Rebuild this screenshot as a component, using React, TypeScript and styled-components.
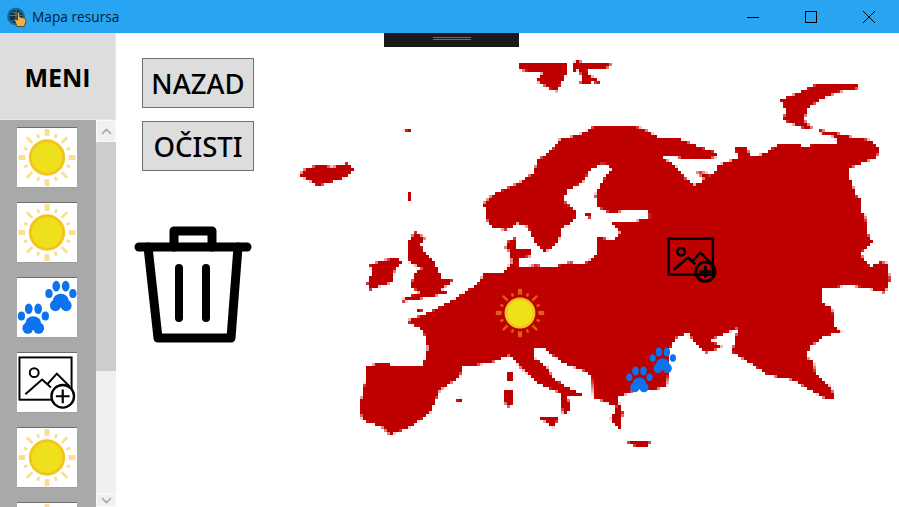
import React from "react";
import styled, { createGlobalStyle } from "styled-components";

const Global = createGlobalStyle`
  html, body { margin: 0; padding: 0; height: 100%; background: #fff; overflow: hidden; }
  #root { height: 100%; }
`;

const Windowed = styled.div`
  position: relative;
  width: 899px;
  height: 507px;
  display: flex;
  flex-direction: column;
  font-family: "Open Sans", "Noto Sans", sans-serif;
  color: #000;
  overflow: hidden;
`;
const TitleBar = styled.header`
  height: 33px;
  flex: none;
  background: #27a5f3;
  display: flex;
  align-items: center;
  padding: 0 1px 0 7px;
`;
const TitleText = styled.span`
  margin-left: 5px;
  font-size: 13.7px;
  color: #04202e;
`;
const WindowControls = styled.div`
  margin-left: auto;
  display: flex;
`;
const WindowButton = styled.div`
  width: 58px;
  height: 33px;
  display: flex;
  align-items: center;
  justify-content: center;
`;
const Body = styled.main`
  flex: 1;
  min-height: 0;
  display: flex;
`;
const Sidebar = styled.aside`
  width: 116px;
  flex: none;
  display: flex;
  flex-direction: column;
`;
const MenuHeader = styled.div`
  height: 87px;
  flex: none;
  box-sizing: border-box;
  background: #dddddd;
  border-right: 1px solid #e6e6e6;
  border-bottom: 1px solid #e6e6e6;
  display: flex;
  align-items: center;
  justify-content: center;
  font-size: 25px;
  font-weight: 700;
  padding-top: 1px;
`;
const ListArea = styled.div`
  flex: 1;
  min-height: 0;
  display: flex;
`;
const CardList = styled.div`
  width: 96px;
  flex: none;
  box-sizing: border-box;
  background: #a9a9a9;
  padding: 7px 0 0 17px;
  display: flex;
  flex-direction: column;
  gap: 14px;
  overflow: hidden;
`;
const Card = styled.div`
  width: 60px;
  height: 61px;
  flex: none;
  box-sizing: border-box;
  background: #fff;
  border-top: 1px solid #6e6e6e;
  border-bottom: 1px solid #a0a0a0;
  display: flex;
`;
const Scrollbar = styled.div`
  width: 20px;
  flex: none;
  background: #f0f0f0;
  display: flex;
  flex-direction: column;
`;
const ScrollButton = styled.div<{ $h: number }>`
  height: ${(p) => p.$h}px;
  flex: none;
  box-sizing: border-box;
  background: #f0f0f0;
  border: 1px solid #fafafa;
  display: flex;
  align-items: center;
  justify-content: center;
`;
const Thumb = styled.div`
  height: 229px;
  flex: none;
  background: #cdcdcd;
`;
const Track = styled.div`
  flex: 1;
`;
const ToolColumn = styled.section`
  width: 160px;
  flex: none;
  box-sizing: border-box;
  padding: 25px 0 0 26px;
  display: flex;
  flex-direction: column;
`;
const ActionButton = styled.button`
  width: 112px;
  height: 50px;
  flex: none;
  margin: 0 0 13px;
  padding: 1px 0 0;
  box-sizing: border-box;
  background: #dddddd;
  border: 1px solid #707070;
  font-family: "Noto Sans", "Open Sans", sans-serif;
  font-size: 27.5px;
  font-weight: 500;
  color: #000;
`;
const TrashWrap = styled.div`
  margin: 38px 0 0 -9px;
  line-height: 0;
`;
const MapCanvas = styled.section`
  position: relative;
  flex: 1;
  min-width: 0;
`;
const MapSvg = styled.svg`
  display: block;
  width: 100%;
  height: 100%;
`;
const Pin = styled.div<{ $x: number; $y: number }>`
  position: absolute;
  left: ${(p) => p.$x}px;
  top: ${(p) => p.$y}px;
  width: 50px;
  height: 50px;
  display: flex;
`;
const DebugHandle = styled.div`
  position: absolute;
  left: 384px;
  top: 33px;
  width: 135px;
  height: 14px;
  background: #1a1a1a;
  display: flex;
  flex-direction: column;
  align-items: center;
  padding-top: 4px;
  box-sizing: border-box;
  gap: 1px;
`;
const HandleLine = styled.div`
  width: 38px;
  height: 1px;
  background: #6b6b6b;
`;
const HiddenDefs = styled.svg`
  position: absolute;
  width: 0;
  height: 0;
`;

const Sun = () => {
  const long = [0, 90, 180, 270];
  const diag = [45, 135, 225, 315];
  const short = [22.5, 67.5, 112.5, 157.5, 202.5, 247.5, 292.5, 337.5];
  return (
    <svg viewBox="0 0 60 60" width="100%" height="100%">
      <g filter="url(#soft)">
        <g stroke="#f5c020" strokeOpacity={0.5}>
          {long.map((a) => (
            <line key={a} x1="30" y1="1" x2="30" y2="8" strokeWidth="5" transform={`rotate(${a} 30 30)`} />
          ))}
          {diag.map((a) => (
            <line key={a} x1="30" y1="1" x2="30" y2="9" strokeWidth="2.8" transform={`rotate(${a} 30 30)`} />
          ))}
          {short.map((a) => (
            <line key={a} x1="30" y1="4.5" x2="30" y2="8.5" strokeWidth="2.8" transform={`rotate(${a} 30 30)`} />
          ))}
        </g>
        <circle cx="30" cy="30" r="18.5" fill="#f3c51f" />
        <circle cx="30" cy="30" r="15.5" fill="#efe01d" />
      </g>
    </svg>
  );
};

const PawShape = ({ x, y }: { x: number; y: number }) => (
  <g transform={`translate(${x} ${y})`} fill="#0b72ee">
    <ellipse cx="0" cy="-2" rx="8" ry="7" />
    <ellipse cx="-5.5" cy="3" rx="5.5" ry="5.8" />
    <ellipse cx="5.5" cy="3" rx="5.5" ry="5.8" />
    <ellipse cx="-12" cy="-9.3" rx="3.7" ry="4.6" />
    <ellipse cx="-4.6" cy="-16.7" rx="3.9" ry="5.4" />
    <ellipse cx="5" cy="-16.7" rx="3.9" ry="5.4" />
    <ellipse cx="12.3" cy="-9.3" rx="3.7" ry="4.6" />
  </g>
);
const Paws = () => (
  <svg viewBox="0 0 60 60" width="100%" height="100%">
    <g filter="url(#soft)">
      <PawShape x={44} y={25} />
      <PawShape x={16} y={48} />
    </g>
  </svg>
);
const AddImage = ({ disc, weight }: { disc: string; weight: number }) => (
  <svg viewBox="0 0 60 60" width="100%" height="100%" fill="none" stroke="#000" strokeWidth={weight}>
    <rect x="2" y="4.5" width="53" height="43" />
    <circle cx="17" cy="20" r="4.5" />
    <path d="M8 42 L25 27 L34 35 M31 31 L40 21 L53 34" />
    <circle cx="46" cy="44" r="11.5" fill={disc} strokeWidth={weight + 0.4} />
    <path d="M46 37 V51 M39 44 H53" strokeWidth={weight + 0.2} />
  </svg>
);
const Trash = () => (
  <svg width="124" height="124" viewBox="0 0 124 124" fill="none" stroke="#000" strokeWidth="9" strokeLinecap="round" strokeLinejoin="round">
    <path d="M6 25 H114" />
    <path d="M41 25 V9 H79 V25" />
    <path d="M15 25 L25 116 H98 L105 25" />
    <path d="M46 46 V96 M73 46 V96" strokeWidth="8" />
  </svg>
);
const AppIcon = () => (
  <svg width="20" height="20" viewBox="0 0 20 20">
    <circle cx="9" cy="9.5" r="9" fill="#0d6fa8" />
    <circle cx="9" cy="9.5" r="6.8" fill="#123242" />
    <path d="M2.5 8.5 H15 M9 3 V16 M4.5 5 Q9 8 13.5 5 M4.5 14 Q9 11.5 13.5 14" stroke="#5b8a94" strokeWidth="0.9" fill="none" />
    <path d="M10 19.5 L7.5 13 L8.5 12 L10.5 13 L10.5 6 Q11.5 5 12.5 6 L12.8 10 L17.5 11 Q19.3 12 18.8 15 L17.3 19.5 Z" fill="#f2b04a" stroke="#3d2a10" strokeWidth="0.7" />
  </svg>
);
const Chevron = ({ up }: { up?: boolean }) => (
  <svg width="11" height="7" viewBox="0 0 11 7" fill="none" stroke="#a6a6a6" strokeWidth="1.6">
    <path d={up ? "M1 6 L5.5 1.5 L10 6" : "M1 1 L5.5 5.5 L10 1"} />
  </svg>
);

const LAND: string[] = [
  "483,204 492,195 507,188 520,182 533,173 538,160 555,147 560,139 570,137 583,133 593,127 607,126 630,126 642,128 662,139 680,139 700,147 718,153 717,157 703,159 687,159 665,155 663,158 675,165 685,178 695,185 705,180 697,172 709,173 710,176 718,170 718,165 738,158 735,148 747,148 750,155 755,157 767,152 777,145 800,143 802,147 810,147 812,144 837,143 835,137 820,133 820,130 833,132 852,137 870,140 879,149 877,157 850,168 848,173 857,197 861,198 862,213 865,213 867,233 873,242 860,253 870,267 880,262 888,263 890,280 885,293 867,288 847,285 833,288 823,287 823,303 832,308 835,327 842,331 823,337 810,347 806,357 814,362 815,373 832,388 834,400 828,400 810,390 793,380 768,375 753,365 732,352 738,328 710,340 722,347 707,353 697,345 688,333 677,337 670,348 667,387 650,390 640,388 617,398 623,413 620,430 610,420 617,407 593,397 592,377 587,372 563,363 542,347 533,347 533,357 547,367 553,378 567,387 583,395 568,397 570,410 563,415 560,393 537,383 520,367 510,355 490,363 462,367 460,377 440,390 430,413 410,427 390,435 382,427 362,420 360,405 365,382 365,367 383,362 397,367 423,365 428,348 423,330 406,321 430,312 453,300 480,282 483,274 503,272 512,262 510,252 505,247 507,242 517,237 516,250 530,248 532,256 518,258 520,267 537,265 550,268 570,262 583,265 598,253 598,237 613,240 620,233 612,223 633,222 650,217 648,211 623,211 610,213 598,207 595,195 603,180 612,168 603,163 590,170 583,182 568,190 563,200 577,213 573,222 562,228 558,243 545,252 535,243 528,227 518,223 507,230 493,228 487,220 487,213",
  "520,63 545,64 562,63 567,63 567,73 562,82 556,92 538,82 538,79 542,73 520,70",
  "572,64 578,59 582,63 612,63 607,68 593,69 586,69 590,75 600,82 597,84 592,80 590,84 580,84 582,76 578,70 572,72",
  "297,178 302,172 305,169 318,165 333,167 347,163 355,169 347,177 328,183 318,186 312,182 302,177",
  "403,131 411,129 411,133 403,133",
  "407,193 411,193 411,200 407,200",
  "415,232 420,234 426,240 420,243 423,250 433,260 442,278 452,280 450,285 440,288 447,293 430,297 402,302 403,299 420,292 410,287 415,273 422,268 410,263 407,252 407,243",
  "370,265 383,260 398,258 402,263 395,268 393,282 377,287 370,290 367,283 372,273",
  "415,308 420,308 423,312 417,312",
  "507,373 513,371 513,382 508,382",
  "505,390 512,389 513,403 508,407 503,400",
  "538,417 558,417 555,428 547,423",
  "453,403 462,397 462,403",
  "627,442 650,442 647,447 635,446",
  "548,437 552,437 552,439 548,439",
  "583,212 586,212 590,214 590,218 586,216",
  "780,100 800,92 815,85 835,85 858,83 860,88 838,92 820,100 808,108 804,120 812,128 810,130 800,127 783,120 786,110",
];

const CardImage = () => <AddImage disc="#fff" weight={2} />;
const Cards = [Sun, Sun, Paws, CardImage, Sun, Sun];

export default function App() {
  return (
    <>
      <Global />
      <Windowed>
        <HiddenDefs>
          <filter id="soft">
            <feGaussianBlur stdDeviation="0.5" />
          </filter>
        </HiddenDefs>
        <TitleBar>
          <AppIcon />
          <TitleText>Mapa resursa</TitleText>
          <WindowControls>
            <WindowButton>
              <svg width="12" height="12"><path d="M0 6.5 H12" stroke="#000" /></svg>
            </WindowButton>
            <WindowButton>
              <svg width="12" height="12" fill="none"><rect x="0.5" y="0.5" width="11" height="11" stroke="#000" /></svg>
            </WindowButton>
            <WindowButton>
              <svg width="12" height="12"><path d="M0 0 L12 12 M12 0 L0 12" stroke="#000" /></svg>
            </WindowButton>
          </WindowControls>
        </TitleBar>
        <Body>
          <Sidebar>
            <MenuHeader>MENI</MenuHeader>
            <ListArea>
              <CardList>
                {Cards.map((C, i) => (
                  <Card key={i}>
                    <C />
                  </Card>
                ))}
              </CardList>
              <Scrollbar>
                <ScrollButton $h={22}>
                  <Chevron up />
                </ScrollButton>
                <Thumb />
                <Track />
                <ScrollButton $h={14}>
                  <Chevron />
                </ScrollButton>
              </Scrollbar>
            </ListArea>
          </Sidebar>
          <ToolColumn>
            <ActionButton>NAZAD</ActionButton>
            <ActionButton>OČISTI</ActionButton>
            <TrashWrap>
              <Trash />
            </TrashWrap>
          </ToolColumn>
          <MapCanvas>
            <MapSvg viewBox="276 33 623 474">
              <defs>
                <filter id="pixelate" filterUnits="userSpaceOnUse" primitiveUnits="userSpaceOnUse" x="276" y="33" width="623" height="474" colorInterpolationFilters="sRGB">
                  <feFlood x="277" y="34" width="1" height="1" floodColor="#000" />
                  <feComposite x="276" y="33" width="3" height="3" />
                  <feTile x="276" y="33" width="623" height="474" result="dots" />
                  <feComposite in="SourceGraphic" in2="dots" operator="in" />
                  <feMorphology operator="dilate" radius="1" />
                  <feGaussianBlur stdDeviation="0.35" />
                </filter>
              </defs>
              <g filter="url(#pixelate)">
                {LAND.map((points) => (
                  <polygon key={points} points={points} fill="#bf0000" />
                ))}
              </g>
            </MapSvg>
            <Pin $x={219} $y={255}>
              <Sun />
            </Pin>
            <Pin $x={391} $y={202}>
              <AddImage disc="transparent" weight={3} />
            </Pin>
            <Pin $x={350} $y={312}>
              <Paws />
            </Pin>
          </MapCanvas>
        </Body>
        <DebugHandle>
          <HandleLine />
          <HandleLine />
        </DebugHandle>
      </Windowed>
    </>
  );
}
